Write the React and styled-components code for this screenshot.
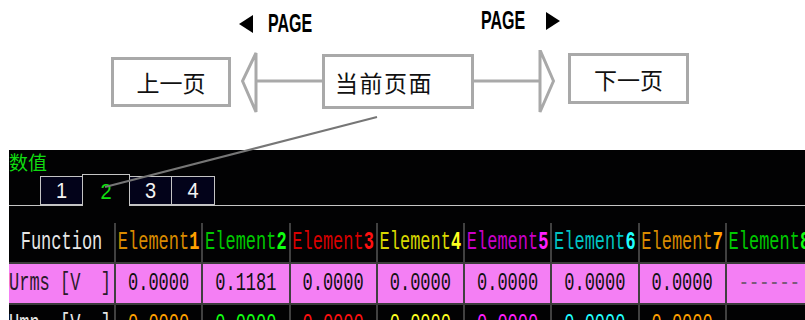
import styled, { createGlobalStyle } from "styled-components";

const GlobalStyle = createGlobalStyle`
  body {
    margin: 0;
    background: #fff;
    font-family: "Liberation Sans", "Noto Sans CJK SC", sans-serif;
  }
`;

const Frame = styled.div`
  position: relative;
  width: 805px;
  height: 320px;
  overflow: hidden;
  background: #fff;
`;

/* ---------- top diagram ---------- */

const Diagram = styled.div`
  display: grid;
  grid-template-columns: 120px 10px 81px 152px 81px 13px 121px;
  grid-template-rows: 38px 63px;
  align-items: center;
  height: 150px;
  box-sizing: border-box;
  padding: 12px 0 0 111px;
`;

const PageLabel = styled.div`
  grid-row: 1;
  grid-column: ${(p) => p.$col};
  justify-self: ${(p) => (p.$end ? "end" : "start")};
  align-self: start;
  display: flex;
  align-items: center;
  gap: ${(p) => p.$gap}px;
  height: 20px;
  margin-top: ${(p) => p.$top}px;
  margin-left: ${(p) => (p.$end ? 0 : -2)}px;
  margin-right: ${(p) => (p.$end ? -5 : 0)}px;
`;

const PageWord = styled.span`
  display: inline-block;
  width: 45px;
  overflow: visible;
  white-space: nowrap;

  span {
    display: inline-block;
    font-family: "Liberation Sans", sans-serif;
    font-weight: bold;
    font-size: 25px;
    line-height: 20px;
    color: #000;
    transform: scaleX(0.64) scaleY(1.03);
    transform-origin: left center;
  }
`;

const PageBox = styled.div`
  grid-row: 2;
  grid-column: ${(p) => p.$col};
  height: ${(p) => p.$h}px;
  margin-bottom: ${(p) => p.$lift || 0}px;
  box-sizing: border-box;
  border: 3px solid #a9a9a9;
  display: flex;
  align-items: center;
  justify-content: ${(p) => (p.$left ? "flex-start" : "center")};
  padding: ${(p) => (p.$left ? "0 0 0 10px" : "0")};
  font-family: "Noto Sans CJK SC", sans-serif;
  font-size: 23px;
  letter-spacing: ${(p) => (p.$left ? "1.5px" : "0")};
  color: #111;
`;

const ArrowCell = styled.svg`
  grid-row: 2;
  grid-column: ${(p) => p.$col};
  display: block;
  align-self: stretch;
`;

const Triangle = ({ dir }) => (
  <svg width="15" height="18" viewBox="0 0 15 18">
    {dir === "left" ? (
      <polygon points="14,0 0,9 14,18" fill="#000" />
    ) : (
      <polygon points="1,0 15,9 1,18" fill="#000" />
    )}
  </svg>
);

/* ---------- black instrument panel ---------- */

const Panel = styled.div`
  margin-left: 9px;
  height: 170px;
  background: #020203;
`;

const PanelTitle = styled.div`
  display: flex;
  align-items: center;
  height: 22px;
  font-family: "Noto Sans CJK SC", sans-serif;
  font-size: 19px;
  line-height: 1;
  color: #10dc10;
`;

const TabBar = styled.div`
  display: flex;
  align-items: flex-end;
  height: 33px;
  padding-left: 31px;
  border-bottom: 1px solid #c4c4c4;
`;

const Tab = styled.div`
  box-sizing: border-box;
  width: ${(p) => p.$w}px;
  height: ${(p) => (p.$active ? 32 : 29)}px;
  margin-left: -1px;
  margin-bottom: ${(p) => (p.$active ? -1 : 0)}px;
  border: 1px solid #c4c4c4;
  border-bottom: ${(p) => (p.$active ? "none" : "1px solid #c4c4c4")};
  background: ${(p) => (p.$active ? "#020203" : "#03031a")};
  display: flex;
  align-items: center;
  justify-content: center;
  padding-top: ${(p) => (p.$active ? 2 : 0)}px;
  font-family: "Liberation Sans", sans-serif;
  font-size: 20px;
  color: ${(p) => (p.$active ? "#10e010" : "#f4f4f4")};

  span {
    display: inline-block;
    transform: scaleY(1.1);
  }

  &:first-child {
    margin-left: 0;
  }
`;

const Table = styled.div`
  margin-top: 17px;
  overflow: hidden;
`;

const Row = styled.div`
  display: grid;
  grid-template-columns: 105px repeat(8, 87.25px);
  height: 41px;
  box-sizing: border-box;
  border-bottom: 2px solid #3c3c3c;
  background: ${(p) => p.$bg || "transparent"};
`;

const Cell = styled.div`
  display: flex;
  align-items: center;
  justify-content: ${(p) => (p.$start ? "flex-start" : "center")};
  border-left: ${(p) => (p.$first ? "none" : "2px solid #404040")};
  overflow: visible;
  white-space: pre;
  font-family: "Liberation Mono", monospace;
  font-size: 17px;
  color: ${(p) => p.$color || "#e6e6e6"};
`;

const Tall = styled.span`
  display: inline-block;
  transform: scaleY(1.5);
`;

const Digit = styled.b`
  color: ${(p) => p.$color};
`;

const Overlay = styled.svg`
  position: absolute;
  left: 0;
  top: 0;
  pointer-events: none;
`;

const elements = [
  { dim: "#d88a00", bright: "#ffa000" },
  { dim: "#00c800", bright: "#10ff10" },
  { dim: "#d80000", bright: "#ff1010" },
  { dim: "#d8d800", bright: "#ffff20" },
  { dim: "#c800c8", bright: "#ff20ff" },
  { dim: "#00c4c4", bright: "#20ffff" },
  { dim: "#d88a00", bright: "#ffa000" },
  { dim: "#00c800", bright: "#10ff10" },
];

const urms = ["0.0000", "0.1181", "0.0000", "0.0000", "0.0000", "0.0000", "0.0000", "------"];
const umn = ["0.0000", "0.0000", "0.0000", "0.0000", "0.0000", "0.0000", "0.0000", "------"];

const tabs = [
  { n: 1, w: 43 },
  { n: 2, w: 48, active: true },
  { n: 3, w: 43 },
  { n: 4, w: 44 },
];

export default function App() {
  return (
    <Frame>
      <GlobalStyle />
      <Diagram>
        <PageLabel $col={3} $gap={14} $top={2}>
          <Triangle dir="left" />
          <PageWord>
            <span>PAGE</span>
          </PageWord>
        </PageLabel>
        <PageLabel $col={5} $gap={19} $top={-1} $end>
          <PageWord>
            <span>PAGE</span>
          </PageWord>
          <Triangle dir="right" />
        </PageLabel>

        <PageBox $col={1} $h={50}>上一页</PageBox>
        <ArrowCell $col={3} width="81" height="63" viewBox="0 0 81 63">
          <g fill="none" stroke="#a9a9a9" strokeWidth="3">
            <polygon points="15,3 1.5,31 15,62" />
            <line x1="15" y1="31" x2="81" y2="31" />
          </g>
        </ArrowCell>
        <PageBox $col={4} $h={55} $left>
          当前页面
        </PageBox>
        <ArrowCell $col={5} width="81" height="63" viewBox="0 0 81 63">
          <g fill="none" stroke="#a9a9a9" strokeWidth="3">
            <line x1="0" y1="31" x2="66" y2="31" />
            <polygon points="66,0 79.5,31 66,62" />
          </g>
        </ArrowCell>
        <PageBox $col={7} $h={51} $lift={6}>
          下一页
        </PageBox>
      </Diagram>

      <Panel>
        <PanelTitle>数值</PanelTitle>
        <TabBar>
          {tabs.map((t) => (
            <Tab key={t.n} $w={t.w} $active={t.active}>
              <span>{t.n}</span>
            </Tab>
          ))}
        </TabBar>

        <Table>
          <Row>
            <Cell $first>
              <Tall>Function</Tall>
            </Cell>
            {elements.map((e, i) => (
              <Cell key={i} $color={e.dim}>
                <Tall>
                  Element<Digit $color={e.bright}>{i + 1}</Digit>
                </Tall>
              </Cell>
            ))}
          </Row>
          <Row $bg="#f47ff4">
            <Cell $first $start $color="#2a1a2a">
              <Tall>{"Urms [V  ]"}</Tall>
            </Cell>
            {urms.map((v, i) => (
              <Cell key={i} $color={v.startsWith("-") ? "#7a5a7a" : "#101010"}>
                <Tall>{v}</Tall>
              </Cell>
            ))}
          </Row>
          <Row>
            <Cell $first $start>
              <Tall>{"Umn  [V  ]"}</Tall>
            </Cell>
            {umn.map((v, i) => (
              <Cell key={i} $color={elements[i].bright}>
                <Tall>{v}</Tall>
              </Cell>
            ))}
          </Row>
        </Table>
      </Panel>

      <Overlay width="805" height="320" viewBox="0 0 805 320">
        <line x1="377" y1="117" x2="105" y2="187" stroke="#767676" strokeWidth="2" />
      </Overlay>
    </Frame>
  );
}
